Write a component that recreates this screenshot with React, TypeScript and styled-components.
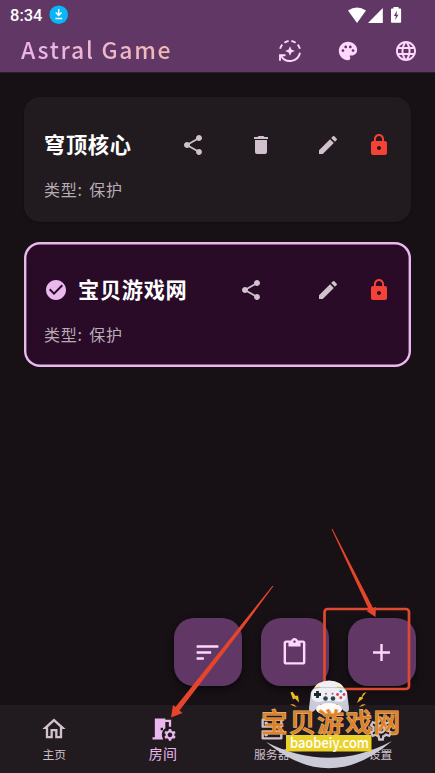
import React from 'react';
import styled, { createGlobalStyle } from 'styled-components';
import {
  MdShare, MdDelete, MdEdit, MdLock, MdCheckCircle, MdPalette, MdLanguage, MdSort,
  MdContentPaste, MdAdd, MdOutlineHome, MdOutlineDns, MdOutlineSettings, MdRoomPreferences,
} from 'react-icons/md';

const GlobalStyle = createGlobalStyle`
  * { box-sizing: border-box; }
  body { margin: 0; background: #181216; }
  svg { display: block; flex: none; }
`;

const Screen = styled.div`
  position: relative;
  display: flex;
  flex-direction: column;
  width: 435px;
  height: 773px;
  overflow: hidden;
  background: #171115;
  font-family: Roboto, 'Noto Sans CJK SC', sans-serif;
`;

const Header = styled.header`
  height: 72px;
  flex: none;
  background: #613865;
  box-shadow: 0 1px 0 #2b1d2d;
`;

const StatusBar = styled.div`
  display: flex;
  align-items: center;
  justify-content: space-between;
  height: 29px;
  padding: 0 32px 0 10px;
`;

const StatusGroup = styled.div`
  display: flex;
  align-items: center;
`;

const Clock = styled.span`
  width: 39px;
  color: #fff;
  font-size: 16.5px;
  font-weight: 500;
  line-height: 29px;
  padding-top: 2px;
`;

const TitleBar = styled.div`
  display: flex;
  align-items: center;
  justify-content: space-between;
  height: 43px;
  padding: 0 17px 0 21px;
`;

const AppTitle = styled.h1`
  margin: 0;
  padding-bottom: 3px;
  font-family: 'Noto Sans CJK SC', sans-serif;
  font-size: 23px;
  font-weight: 500;
  line-height: 40px;
  letter-spacing: 1.7px;
  white-space: nowrap;
  color: transparent;
  background: linear-gradient(90deg, #ebb5ee, #f2b9b2);
  background-clip: text;
  -webkit-background-clip: text;
`;

const HeaderActions = styled.div`
  display: flex;
  align-items: center;
  gap: 35px;
  color: #ffd6fc;
`;

const RoomList = styled.main`
  display: flex;
  flex-direction: column;
  flex: 1;
  gap: 20px;
  padding: 24.6px 24px 0;
`;

const RoomCard = styled.section<{ $selected?: boolean }>`
  height: 125.2px;
  padding: 28px 20px 0;
  border-radius: 16px;
  background: ${(p) => (p.$selected ? '#290b28' : '#211b20')};
  box-shadow: ${(p) => (p.$selected ? 'inset 0 0 0 2.4px #eab8ed' : '0 1px 2px #120c11')};
`;

const CardRow = styled.div`
  display: flex;
  align-items: center;
  height: 40px;
`;

const RoomName = styled.h2`
  margin: 0 auto 0 0;
  padding-bottom: 2px;
  color: #fff;
  font-family: 'Noto Sans CJK SC', sans-serif;
  font-size: 21.2px;
  font-weight: 700;
  line-height: 38px;
  letter-spacing: 0.7px;
  white-space: nowrap;
`;

const CheckMark = styled.span`
  margin-right: 10px;
  color: #eab8ed;
`;

const Actions = styled.div<{ $wide?: boolean }>`
  display: flex;
  gap: ${(p) => (p.$wide ? 52.6 : 43.4)}px;
  margin-right: 27px;
  color: #d1c1cc;
`;

const LockIcon = styled(MdLock)`
  color: #f44336;
`;

const RoomType = styled.p`
  margin: 9.5px 0 0;
  color: #b9abb5;
  font-family: 'Noto Sans CJK SC', sans-serif;
  font-size: 16px;
  line-height: 30px;
  letter-spacing: 0.8px;
  word-spacing: 2px;
`;

const FabRow = styled.div`
  display: flex;
  justify-content: flex-end;
  gap: 19px;
  padding: 0 19px 19px 0;
`;

const Fab = styled.button`
  display: flex;
  align-items: center;
  justify-content: center;
  width: 68px;
  height: 68px;
  padding: 0 1px 0 0;
  border: 0;
  border-radius: 20px;
  background: #613865;
  color: #ffd6fc;
  box-shadow: 0 3px 7px rgba(0, 0, 0, 0.6);
`;

const BottomNav = styled.nav`
  display: grid;
  grid-template-columns: repeat(4, 1fr);
  height: 68px;
  flex: none;
  background: #211b20;
`;

const NavItem = styled.div<{ $active?: boolean }>`
  display: flex;
  flex-direction: column;
  align-items: center;
  padding-top: 10px;
  color: ${(p) => (p.$active ? '#eab8ed' : '#d1c1cc')};
`;

const NavLabel = styled.span<{ $active?: boolean }>`
  font-family: 'Noto Sans CJK SC', sans-serif;
  font-size: ${(p) => (p.$active ? 14 : 11.8)}px;
  line-height: 20px;
  margin-top: ${(p) => (p.$active ? -0.5 : 1)}px;
  letter-spacing: ${(p) => (p.$active ? 0.5 : 0.2)}px;
  white-space: nowrap;
`;

const Overlay = styled.svg`
  position: absolute;
  inset: 0;
  pointer-events: none;
`;

const DownloadBadge = () => (
  <svg width="20" height="20" viewBox="0 0 20 20">
    <circle cx="9.7" cy="9.7" r="9.3" fill="#0ab6fa" />
    <path d="M9.700 4V10M6.800 7.500l2.900 2.900 2.900-2.900M6.400 13.400h6.800" fill="none" stroke="#fff" strokeWidth="1.500" />
  </svg>
);

const StatusIcons = () => (
  <svg width="56" height="18" viewBox="347 5 56 18" fill="#fff">
    <path d="M348 9.500Q357 3.400 366 9.500L357 22Z" />
    <path d="M382.800 7V22H368Z" />
    <path d="M393.500 6h5v1.500h1.800q.8 0 .8.800v12.700q0 .8-.8.800h-8.500q-.8 0-.8-.8V8.300q0-.8.8-.8h1.700Z" />
    <path d="M396.900 9.800l-3 5.200h2l-.8 4 3.400-5.200h-2Z" fill="#613865" />
  </svg>
);

const SyncSparkle = () => (
  <svg width="24" height="24" viewBox="0 0 24 24">
    <g fill="none" stroke="currentColor" strokeWidth="1.9">
      <path d="M2.100 9.800A10 10 0 0 1 4.300 5.600M6.400 3.700A10 10 0 0 1 10.600 2M13.400 2A10 10 0 0 1 17.600 3.700M19.700 5.600A10 10 0 0 1 21.900 9.800" />
      <path d="M22 13.800A10.200 10.200 0 0 1 3.200 17" />
      <path d="M2 21.700V16.200H7.500" />
    </g>
    <path d="M12 7.200l1.400 3.400 3.400 1.400-3.400 1.400L12 16.800l-1.400-3.400L7.200 12l3.400-1.400Z" fill="currentColor" />
  </svg>
);

const Annotations = () => (
  <g>
    <rect x="324.500" y="609" width="84.500" height="80" rx="3" fill="none" stroke="#df4931" strokeWidth="2.700" />
    <path d="M331.500 529L332.500 529L373 608L376 607L375.500 617L366.500 611L369 610Z" fill="#e6452b" />
    <path d="M273.500 586L272.500 585.700L175.500 707L173 705L171 717.500L182.500 713L179.500 710.500L242 629Z" fill="#e6452b" />
  </g>
);

const Controller = () => (
  <g>
    <ellipse cx="329" cy="690" rx="15" ry="9.500" fill="#f2f0f3" />
    <path d="M311 692q3-6 9-5h18q6-1 9 5l2 16q0 6-5 3l-7-7h-16l-7 7q-5 3-5-3Z" fill="#c9cbd8" />
    <path d="M311 694q2-7 9-6h18q8-1 9 6 0 8-8 8l-6-1h-8l-6 1q-8 0-8-8Z" fill="#eeeef4" />
    <ellipse cx="329" cy="709" rx="13" ry="6" fill="#fffaf6" />
    <path d="M314 694.500h7M317.500 691v7" stroke="#172a35" strokeWidth="2.800" />
    <circle cx="325.500" cy="698.500" r="2.300" fill="#244452" /><circle cx="333" cy="698.500" r="2.300" fill="#244452" />
    <circle cx="326" cy="693.700" r="1" fill="#cf4864" /><circle cx="332.500" cy="693.700" r="1" fill="#cf4864" />
    <circle cx="337.500" cy="694.500" r="1.400" fill="#d83c4e" /><circle cx="344" cy="694.500" r="1.400" fill="#d83c4e" />
    <circle cx="340.800" cy="691.300" r="1.400" fill="#299fc0" /><circle cx="340.800" cy="697.700" r="1.400" fill="#d83c4e" />
    <path d="M315 688l5-.8M337 687.200l5 .8" stroke="#e2bd4c" strokeWidth="1.200" />
    <path d="M290.500 692.500L292.500 691.800L295.500 696L298 695.500L299 702.500L295 698.500L293 699.500Z" fill="#f2b824" />
    <path d="M366.500 692L363 693.500L361.500 697L359.500 697L357 703L363 698.500L362.500 697Z" fill="#f2b824" />
    <path d="M290 704l4 .5 3 2.500-4-1ZM366 704l-4 .5-3 2.500 4-1Z" fill="#e5a021" />
  </g>
);

const Watermark = () => (
  <g>
    <path d="M266 742Q330 774 392 741Q330 795 266 742Z" fill="#cbcbd8" />
    <Controller />
    <text
      x="261" y="732" textLength="139" fontSize="26.500" fontWeight="500"
      fontFamily="'Noto Sans CJK SC', sans-serif" fill="#dd8326" stroke="#e9b67c" strokeWidth="1.200" paintOrder="stroke"
    >宝贝游戏网</text>
    <rect x="286" y="735" width="85.500" height="16.500" fill="#ead22b" />
    <text
      x="290" y="747.500" textLength="79" lengthAdjust="spacingAndGlyphs" fontSize="14" fontWeight="500"
      fontFamily="'Noto Sans CJK SC', sans-serif" fill="#fff"
    >baobeiy.com</text>
  </g>
);

export default function App() {
  return (
    <Screen>
      <GlobalStyle />
      <Header>
        <StatusBar>
          <StatusGroup><Clock>8:34</Clock><DownloadBadge /></StatusGroup>
          <StatusIcons />
        </StatusBar>
        <TitleBar>
          <AppTitle>Astral Game</AppTitle>
          <HeaderActions>
            <SyncSparkle />
            <MdPalette size={22} />
            <MdLanguage size={24} />
          </HeaderActions>
        </TitleBar>
      </Header>
      <RoomList>
        <RoomCard>
          <CardRow>
            <RoomName>穹顶核心</RoomName>
            <Actions><MdShare size={24} /><MdDelete size={24} /><MdEdit size={24} /></Actions>
            <LockIcon size={24} />
          </CardRow>
          <RoomType>类型: 保护</RoomType>
        </RoomCard>
        <RoomCard $selected>
          <CardRow>
            <CheckMark><MdCheckCircle size={24} /></CheckMark>
            <RoomName>宝贝游戏网</RoomName>
            <Actions $wide><MdShare size={24} /><MdEdit size={24} /></Actions>
            <LockIcon size={24} />
          </CardRow>
          <RoomType>类型: 保护</RoomType>
        </RoomCard>
      </RoomList>
      <FabRow>
        <Fab><MdSort size={29} /></Fab>
        <Fab><MdContentPaste size={29} /></Fab>
        <Fab><MdAdd size={29} /></Fab>
      </FabRow>
      <BottomNav>
        <NavItem><MdOutlineHome size={28} /><NavLabel>主页</NavLabel></NavItem>
        <NavItem $active><MdRoomPreferences size={28} /><NavLabel $active>房间</NavLabel></NavItem>
        <NavItem><MdOutlineDns size={28} /><NavLabel>服务器</NavLabel></NavItem>
        <NavItem><MdOutlineSettings size={28} /><NavLabel>设置</NavLabel></NavItem>
      </BottomNav>
      <Overlay width="435" height="773" viewBox="0 0 435 773">
        <Annotations />
        <Watermark />
      </Overlay>
    </Screen>
  );
}
